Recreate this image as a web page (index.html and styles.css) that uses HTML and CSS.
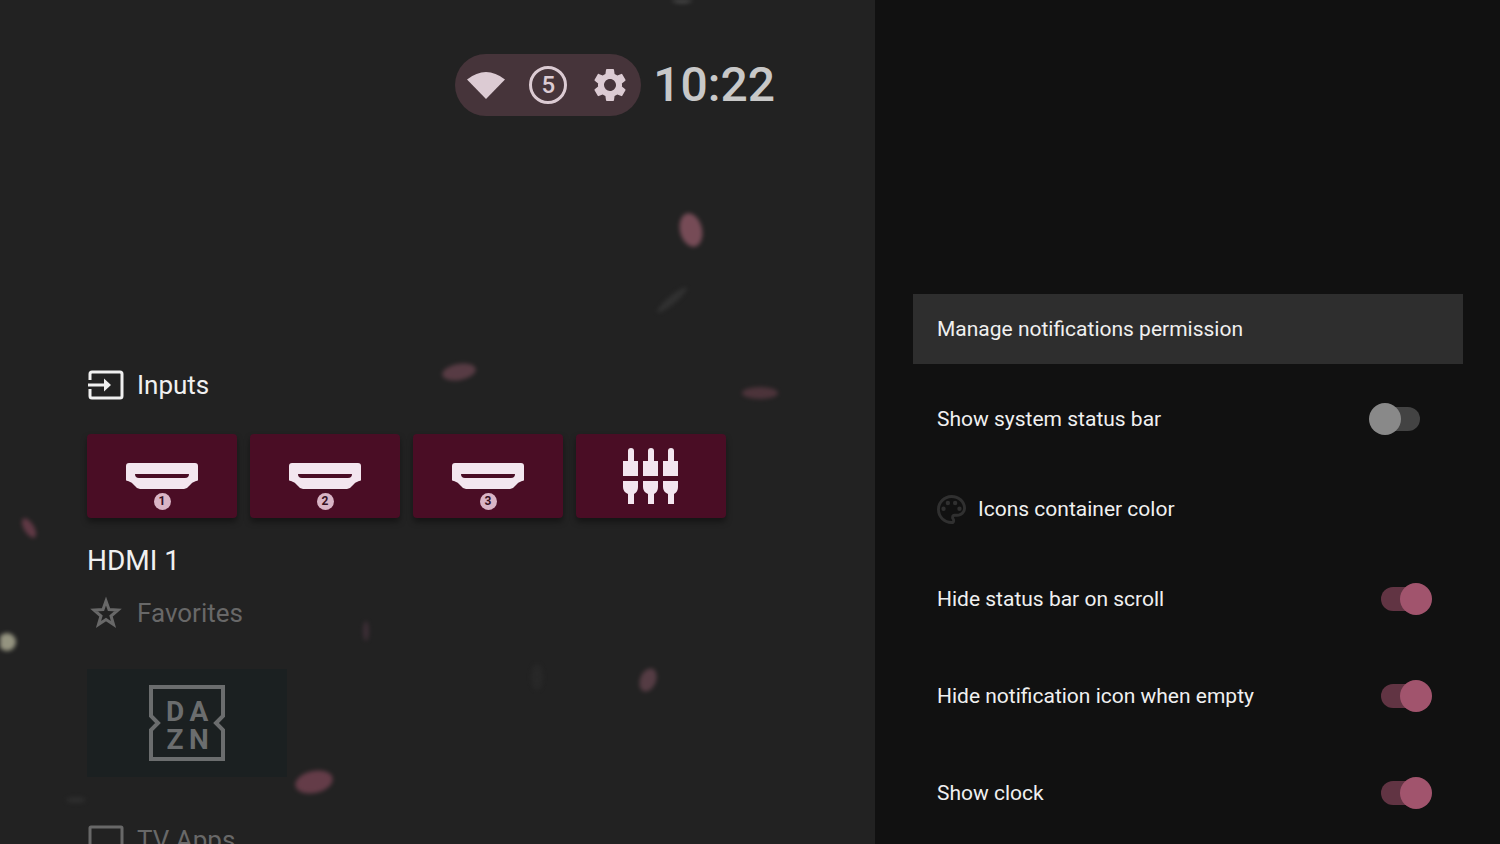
FILE: index.html
```html
<!DOCTYPE html>
<html lang="en">
<head>
    <meta charset="utf-8">
    <title>Launcher settings</title>
    <link rel="stylesheet" href="styles.css">
</head>
<body>
    <main class="home">
        <!-- Wallpaper petals -->
        <svg class="petals" aria-hidden="true">
            <ellipse cx="691" cy="230" rx="11" ry="17" fill="#855360" transform="rotate(-14 691 230)"/>
            <ellipse cx="672" cy="300" rx="19" ry="4" fill="#343434" transform="rotate(-40 672 300)"/>
            <ellipse cx="459" cy="372" rx="17" ry="8" fill="#61404a" transform="rotate(-10 459 372)"/>
            <ellipse cx="760" cy="393" rx="18" ry="6" fill="#54373f"/>
            <ellipse cx="29" cy="528" rx="5" ry="11" fill="#6b3d4b" transform="rotate(-32 29 528)"/>
            <circle cx="7" cy="642" r="9" fill="#a9a891"/>
            <ellipse cx="366" cy="631" rx="3" ry="10" fill="#42313a"/>
            <ellipse cx="648" cy="680" rx="8" ry="12" fill="#5e414a" transform="rotate(22 648 680)"/>
            <ellipse cx="537" cy="677" rx="6" ry="13" fill="#292929"/>
            <ellipse cx="314" cy="782" rx="19" ry="11" fill="#70414f" transform="rotate(-12 314 782)"/>
            <ellipse cx="76" cy="800" rx="10" ry="3" fill="#303030"/>
            <ellipse cx="682" cy="-1" rx="11" ry="4" fill="#5a5a5a"/>
        </svg>

        <header class="status">
            <div class="status-icons">
                <button class="status-button" aria-label="Network">
                    <svg width="38" height="28" viewBox="0 0 38 28"><path d="M0 8.5Q19-6.500 38 8.500L19 28Z" fill="currentColor"/></svg>
                </button>
                <button class="status-button" aria-label="Notifications">
                    <span class="count">5</span>
                </button>
                <button class="status-button" aria-label="Settings">
                    <svg width="40" height="40" viewBox="0 0 24 24"><path fill="currentColor" d="M19.140 12.940c.040-.300.060-.610.060-.940 0-.320-.020-.640-.070-.940l2.030-1.580a.490.490 0 0 0 .120-.610l-1.920-3.320a.488.488 0 0 0-.590-.220l-2.390.960c-.500-.380-1.030-.700-1.620-.940l-.360-2.540a.484.484 0 0 0-.480-.410h-3.840c-.240 0-.430.170-.470.410l-.360 2.540c-.590.240-1.130.570-1.620.940l-2.390-.960c-.220-.080-.470 0-.590.220L2.740 8.870c-.120.210-.080.470.120.610l2.030 1.580c-.050.300-.090.630-.090.940s.020.640.070.940l-2.030 1.580a.490.490 0 0 0-.120.610l1.920 3.320c.120.220.370.290.590.220l2.390-.960c.500.380 1.030.700 1.620.940l.360 2.540c.050.240.240.410.480.410h3.840c.240 0 .440-.170.470-.410l.360-2.540c.590-.240 1.130-.560 1.620-.940l2.390.960c.220.080.470 0 .590-.220l1.920-3.320c.120-.220.070-.470-.120-.610l-2.010-1.580zM12 15.600A3.610 3.610 0 0 1 8.400 12c0-1.980 1.620-3.600 3.600-3.600s3.600 1.620 3.600 3.600-1.620 3.600-3.600 3.600z"/></svg>
                </button>
            </div>
            <time class="clock">10:22</time>
        </header>

        <section class="section">
            <h2 class="section-title">
                <svg class="section-icon" viewBox="0 0 36 36" fill="none" stroke="currentColor" stroke-width="3">
                    <path d="M2 13V7Q2 5 4 5H32Q34 5 34 7V29Q34 31 32 31H4Q2 31 2 29V22M0 18H18"/>
                    <path d="M16 11.500L23 18L16 24.500Z" fill="currentColor" stroke="none"/>
                </svg>
                Inputs
            </h2>
            <div class="cards">
                <button class="card" aria-label="HDMI 1">
                    <svg class="hdmi" viewBox="0 0 72 26"><path fill="currentColor" fill-rule="evenodd" d="M3 0H69Q72 0 72 3V17Q72 18 70 18Q66 19 63 23Q61 26 58 26H14Q11 26 9 23Q6 19 2 18Q0 18 0 17V3Q0 0 3 0ZM9 11Q9 15 13 15H59Q63 15 63 11Z"/></svg>
                    <span class="port">1</span>
                </button>
                <button class="card" aria-label="HDMI 2">
                    <svg class="hdmi" viewBox="0 0 72 26"><path fill="currentColor" fill-rule="evenodd" d="M3 0H69Q72 0 72 3V17Q72 18 70 18Q66 19 63 23Q61 26 58 26H14Q11 26 9 23Q6 19 2 18Q0 18 0 17V3Q0 0 3 0ZM9 11Q9 15 13 15H59Q63 15 63 11Z"/></svg>
                    <span class="port">2</span>
                </button>
                <button class="card" aria-label="HDMI 3">
                    <svg class="hdmi" viewBox="0 0 72 26"><path fill="currentColor" fill-rule="evenodd" d="M3 0H69Q72 0 72 3V17Q72 18 70 18Q66 19 63 23Q61 26 58 26H14Q11 26 9 23Q6 19 2 18Q0 18 0 17V3Q0 0 3 0ZM9 11Q9 15 13 15H59Q63 15 63 11Z"/></svg>
                    <span class="port">3</span>
                </button>
                <button class="card" aria-label="AV">
                    <svg width="56" height="56" viewBox="0 0 56 56" fill="currentColor">
                        <path id="plug" d="M5 13V3Q5 0 8 0T11 3V13H15V28H0V13ZM0 33H15V39Q15 44 11 46V56H5V46Q0 44 0 39Z"/>
                        <use href="#plug" x="20"/>
                        <use href="#plug" x="40"/>
                    </svg>
                </button>
            </div>
            <p class="card-name">HDMI 1</p>
        </section>

        <section class="section dimmed">
            <h2 class="section-title">
                <svg class="section-icon" viewBox="0 0 36 36" fill="none" stroke="currentColor" stroke-width="3">
                    <path d="M18 6L21 14.500L30 15L23 21L25.500 29.500L18 24.500L10.500 29.500L13 21L6 15L15 14.500Z"/>
                </svg>
                Favorites
            </h2>
            <button class="app" aria-label="DAZN">
                <svg class="dazn" width="78" height="78" viewBox="0 0 78 78">
                    <path d="M3 3H75V32L68 39L75 46V75H3V46L10 39L3 32Z" fill="none" stroke="currentColor" stroke-width="4"/>
                    <g class="dazn-text" fill="currentColor" text-anchor="middle">
                        <text x="27" y="37">D</text>
                        <text x="51" y="37">A</text>
                        <text x="27" y="65">Z</text>
                        <text x="51" y="65">N</text>
                    </g>
                </svg>
            </button>
        </section>

        <section class="section dimmed">
            <h2 class="section-title">
                <svg class="section-icon" viewBox="0 0 36 36" fill="none" stroke="currentColor" stroke-width="3">
                    <rect x="2" y="5" width="32" height="24" rx="1"/>
                    <path d="M11 33H25"/>
                </svg>
                TV Apps
            </h2>
        </section>
    </main>

    <aside class="panel">
        <div class="group">
            <button class="row active">Manage notifications permission</button>
            <label class="row">
                Show system status bar
                <input class="switch" type="checkbox">
            </label>
            <button class="row">
                <svg class="palette" viewBox="2 2 20 20" fill="currentColor"><path d="M12 22C6.490 22 2 17.510 2 12S6.490 2 12 2s10 4.040 10 9c0 3.310-2.690 6-6 6h-1.770c-.280 0-.500.220-.500.500 0 .120.050.230.130.330.410.470.640 1.060.640 1.670A2.500 2.500 0 0 1 12 22zm0-18c-4.410 0-8 3.590-8 8s3.590 8 8 8c.280 0 .500-.220.500-.500a.540.540 0 0 0-.140-.350c-.410-.460-.630-1.050-.630-1.650a2.500 2.500 0 0 1 2.500-2.500H16c2.210 0 4-1.790 4-4 0-3.860-3.590-7-8-7z"/><circle cx="6.500" cy="11.500" r="1.500"/><circle cx="9.500" cy="7.500" r="1.500"/><circle cx="14.500" cy="7.500" r="1.500"/><circle cx="17.500" cy="11.500" r="1.500"/></svg>
                Icons container color
            </button>
        </div>
        <div class="group toggles">
            <label class="row">
                Hide status bar on scroll
                <input class="switch" type="checkbox" checked>
            </label>
            <label class="row">
                Hide notification icon when empty
                <input class="switch" type="checkbox" checked>
            </label>
            <label class="row">
                Show clock
                <input class="switch" type="checkbox" checked>
            </label>
        </div>
    </aside>
</body>
</html>
```
FILE: styles.css
```css
* {
    box-sizing: border-box;
}
body {
    margin: 0;
    height: 100vh;
    display: flex;
    overflow: hidden;
    background: #222222;
    color: #f0f0f0;
    font-family: Roboto, sans-serif;
}
button {
    border: none;
    padding: 0;
    font: inherit;
    color: inherit;
    cursor: pointer;
}

/* Home screen */
.home {
    position: relative;
    flex: 1;
    padding: 54px 100px 0 87px;
}
.petals {
    position: absolute;
    top: 0;
    left: 0;
    width: 100%;
    height: 100%;
    filter: blur(2px);
    opacity: 0.85;
    pointer-events: none;
}
.status {
    display: flex;
    justify-content: flex-end;
    align-items: center;
    gap: 12px;
    margin-bottom: 250px;
}
.status-icons {
    display: flex;
    height: 62px;
    border-radius: 31px;
    background: #46343a;
    color: #dccbd3;
}
.status-button {
    display: flex;
    align-items: center;
    justify-content: center;
    width: 62px;
    background: none;
}
.count {
    width: 38px;
    height: 38px;
    border: 3px solid currentColor;
    border-radius: 50%;
    font-size: 24px;
    font-weight: 500;
    line-height: 32px;
}
.clock {
    font-size: 48px;
    font-weight: 500;
    line-height: 62px;
    color: #c8c8c8;
}
.section {
    position: relative;
}
.section-title {
    display: flex;
    align-items: center;
    gap: 12px;
    margin: 0;
    font-size: 26px;
    font-weight: 400;
    line-height: 38px;
}
.section-icon {
    width: 38px;
    height: 36px;
}
.cards {
    display: flex;
    gap: 13px;
    margin-top: 30px;
}
.card {
    display: flex;
    flex-direction: column;
    align-items: center;
    justify-content: center;
    gap: 4px;
    width: 150px;
    height: 84px;
    border-radius: 4px;
    background: #4a0d25;
    color: #f3e6ef;
    box-shadow: 0 4px 6px rgba(0, 0, 0, 0.4);
}
.hdmi {
    width: 72px;
    height: 26px;
    margin-top: 20px;
}
.port {
    width: 17px;
    height: 17px;
    border-radius: 50%;
    background: #d9b5c6;
    color: #35101f;
    font-size: 12px;
    font-weight: 700;
    line-height: 17px;
}
.card-name {
    margin: 24px 0 14px;
    font-size: 28px;
    line-height: 38px;
}
.dimmed {
    color: #686868;
}
.app {
    display: flex;
    align-items: center;
    justify-content: center;
    width: 200px;
    height: 108px;
    margin: 37px 0 44px;
    background: #1b2021;
}
.dazn {
    color: #6b6d6e;
}
.dazn-text {
    font-size: 28px;
    font-weight: 700;
    line-height: 28px;
}

/* Settings panel */
.panel {
    flex: 0 0 41.6667%;
    padding: 294px 37px 0 38px;
    background: #111111;
}
.group {
    display: flex;
    flex-direction: column;
    gap: 20px;
    margin-bottom: 20px;
}
.toggles {
    gap: 27px;
}
.row {
    display: flex;
    flex-shrink: 0;
    align-items: center;
    gap: 12px;
    height: 70px;
    padding: 0 43px 0 24px;
    background: none;
    font-size: 21px;
    text-align: left;
}
.active {
    background: #2e2e2e;
}
.palette {
    width: 29px;
    height: 29px;
    color: #303030;
}
.switch {
    appearance: none;
    display: flex;
    align-items: center;
    width: 39px;
    height: 24px;
    margin: 0 0 0 auto;
    border-radius: 12px;
    background: #434343;
    cursor: pointer;
}
/* The thumb hangs over the end of the track */
.switch::before {
    content: "";
    flex-shrink: 0;
    width: 32px;
    height: 32px;
    margin: 0 -12px;
    border-radius: 50%;
    background: #898989;
}
.switch:checked {
    justify-content: flex-end;
    background: #613443;
}
.switch:checked::before {
    background: #a1546d;
}
```
